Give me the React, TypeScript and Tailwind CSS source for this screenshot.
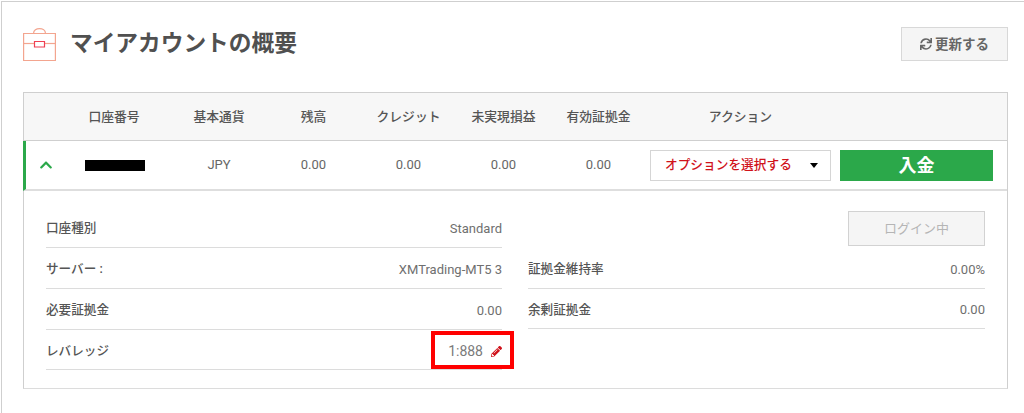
import React from 'react';
import { FaChevronUp, FaPencilAlt, FaSync } from 'react-icons/fa';

const font = 'font-[Roboto,"Noto_Sans_CJK_JP",sans-serif]';

const headers = ['口座番号', '基本通貨', '残高', 'クレジット', '未実現損益', '有効証拠金'];
const values = ['JPY', '0.00', '0.00', '0.00', '0.00'];

function Row({ label, value, children }: { label: string; value?: string; children?: React.ReactNode }) {
  return (
    <div className="h-[41px] last:h-[40px] pt-[3px] flex items-center justify-between border-b border-[#dcdcdc] text-[13px]">
      <span className="text-[12.6px] font-medium text-[#555]">{label}</span>
      {children ?? <span className="text-[#6f6f6f]">{value}</span>}
    </div>
  );
}

export default function App() {
  return (
    <div className={`${font} w-[1024px] h-[413px] bg-white overflow-hidden pt-px pl-px`}>
      <div className="h-full border-l border-t border-[#cfcfcf] pl-[21px] pr-4">
        {/* Title */}
        <div className="h-[90px] flex items-start justify-between">
          <div className="flex items-center mt-[26px] gap-[14px]">
            <svg width="33" height="33" viewBox="0 0 33 33" fill="none" className="shrink-0">
              <path d="M.6 5.5h31.8v27H.6z" stroke="#f3a58f" strokeWidth="1.2" />
              <path d="M1 15.5h31" stroke="#f3a58f" strokeWidth="1.2" />
              <path d="M10.5 5.5c0-6.500 12-6.500 12 0" stroke="#f3a58f" strokeWidth="1.2" />
              <path d="M11.500 13.500h10v5.500h-10z" fill="#fff" stroke="#ef3f52" strokeWidth="1.2" />
            </svg>
            <h1 className="text-[22.700px] leading-none font-bold text-[#505050]">マイアカウントの概要</h1>
          </div>
          <button className="mt-[25px] w-[107px] h-[34px] flex items-center justify-center gap-[3px] bg-[#f5f5f5] border border-[#d8d8d8] text-[13.500px] font-bold text-[#666]">
            <FaSync className="w-[12px] h-[12px]" />
            更新する
          </button>
        </div>

        {/* Table */}
        <div className="w-[985px] h-[297px] border border-[#cfcfcf] border-b-[#dcdcdc] flex flex-col">
          <div className="h-[48px] bg-[#f7f7f7] border-b border-[#cfcfcf] grid grid-cols-[32px_116px_94px_95px_95px_95px_95px_1fr] items-center text-[12.800px] font-medium text-[#555] text-center">
            <span />
            {headers.map((h) => (
              <span key={h}>{h}</span>
            ))}
            <span className="w-[181px] ml-[4px]">アクション</span>
          </div>

          <div className="h-[50px] -ml-px border-l-[3px] border-l-[#2ba84a] border-b-2 border-b-[#dedede] grid grid-cols-[30px_116px_94px_95px_95px_95px_95px_1fr] items-center text-[13px] text-[#666] text-center">
            <FaChevronUp className="w-[14px] h-[14px] ml-[13px] text-[#2ba84a]" />
            <div className="flex justify-center">
              <div className="w-[60px] h-[11px] ml-[2px] bg-black" />
            </div>
            {values.map((v, i) => (
              <span key={i}>{v}</span>
            ))}
            <div className="flex items-center gap-[9px] ml-[4px]">
              <div className="w-[181px] h-[31px] border border-[#d5d5d5] flex items-center justify-between pl-[14px] pr-[12px]">
                <span className="text-[12.700px] font-medium text-[#d0121b]">オプションを選択する</span>
                <span className="w-0 h-0 border-x-[4px] border-x-transparent border-t-[5px] border-t-black" />
              </div>
              <button className="w-[153px] h-[31px] bg-[#2ba84a] text-white text-[18px] font-bold">入金</button>
            </div>
          </div>

          <div className="relative flex gap-[26px] pl-[22px] pr-[21px] pt-[16px]">
            <div className="w-[456px]">
              <Row label="口座種別" value="Standard" />
              <Row label="サーバー :" value="XMTrading-MT5 3" />
              <Row label="必要証拠金" value="0.00" />
              <Row label="レバレッジ">
                <span className="flex items-center gap-[8px] text-[14px] text-[#7a7a7a]">
                  1:888
                  <FaPencilAlt className="w-[11px] h-[11px] text-[#d0121b]" />
                </span>
              </Row>
            </div>
            <div className="w-[457px]">
              <div className="h-[41px] flex items-start justify-end pt-[4px]">
                <button className="w-[137px] h-[35px] bg-[#f5f5f5] border border-[#d2d2d2] text-[13px] text-[#b5b5b5]">ログイン中</button>
              </div>
              <Row label="証拠金維持率" value="0.00%" />
              <Row label="余剰証拠金" value="0.00" />
            </div>
            {/* red highlight around the leverage value */}
            <div className="absolute left-[407px] top-[140px] w-[83px] h-[38px] border-[4px] border-[#ff0000]" />
          </div>
        </div>
      </div>
    </div>
  );
}
